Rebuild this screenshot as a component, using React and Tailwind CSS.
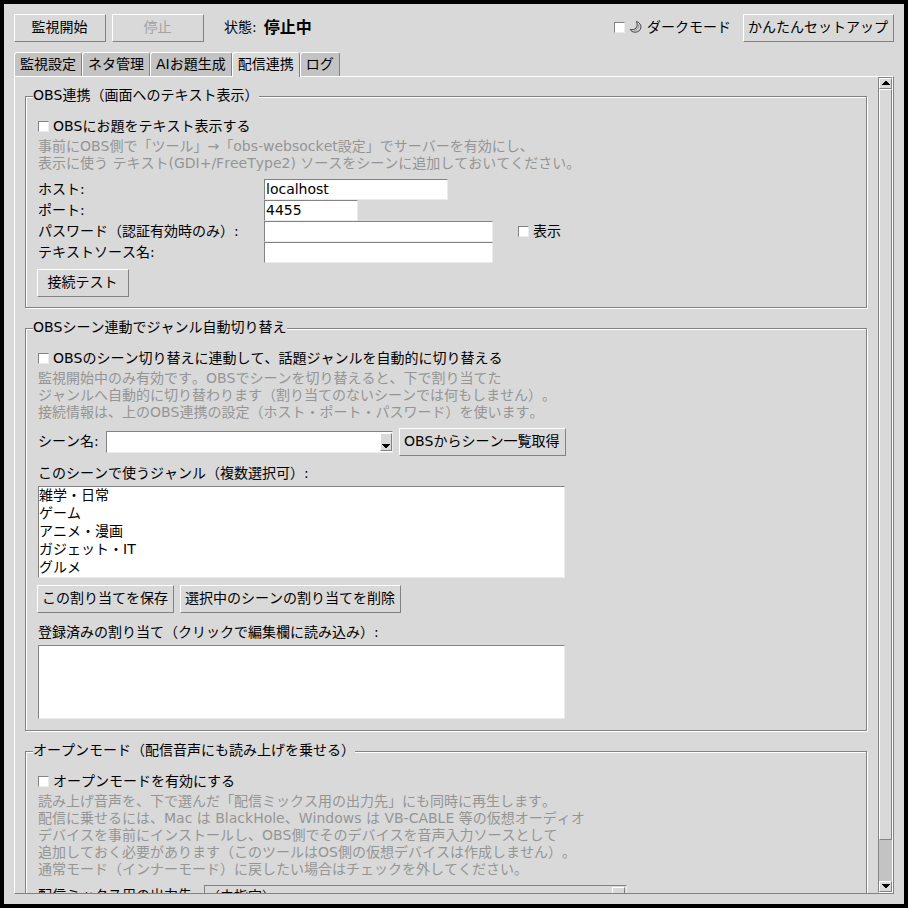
import React from "react";

const raised =
  "border border-t-white border-l-white border-r-[#828282] border-b-[#828282]";
const sunken =
  "border border-t-[#828282] border-l-[#828282] border-r-[#ebebeb] border-b-[#ebebeb]";

function Button({ children, className = "", ...props }) {
  return (
    <button
      type="button"
      className={`h-7 shrink-0 whitespace-nowrap bg-[#d9d9d9] pr-[5px] pb-[2px] pl-1 disabled:text-[#a3a3a3] ${raised} ${className}`}
      {...props}
    >
      {children}
    </button>
  );
}

function Check({ children, className = "" }) {
  return (
    <label className={`flex items-center gap-1 whitespace-nowrap ${className}`}>
      <input
        type="checkbox"
        className={`size-[11px] shrink-0 appearance-none bg-white checked:bg-[#4a6984] ${sunken}`}
      />
      {children}
    </label>
  );
}

function Group({ title, children }) {
  return (
    <fieldset className="min-w-0 border border-[#828282] px-[11px] pt-[11px] pb-[10px] shadow-[1px_1px_0_#fff,inset_1px_1px_0_#fff]">
      <legend className="-ml-1 h-[17px] bg-[#d9d9d9] leading-[15px]">{title}</legend>
      {children}
    </fieldset>
  );
}

function Hint({ lines }) {
  return (
    <p className="mt-[2px] pl-px leading-[17px] text-[#959595]">
      {lines.map((line) => (
        <span key={line} className="block whitespace-nowrap">
          {line}
        </span>
      ))}
    </p>
  );
}

function Field({ id, label, width, value = "", type = "text", children }) {
  return (
    <div className="flex h-[21px] items-center">
      <label htmlFor={id} className="w-[227px] shrink-0 pb-[2px] pl-px">
        {label}
      </label>
      <input
        id={id}
        type={type}
        defaultValue={value}
        className={`h-[21px] bg-white px-px pb-[2px] outline-none ${width} ${sunken}`}
      />
      {children}
    </div>
  );
}

function Arrow({ up = false }) {
  return (
    <svg width="8" height="5" viewBox="0 0 8 5" shapeRendering="crispEdges" aria-hidden="true">
      {up ? (
        <path d="M3 0h2v1h1v1h1v1h1v1H0V3h1V2h1V1h1z" />
      ) : (
        <path d="M0 0h8v1H7v1H6v1H5v1H3V3H2V2H1V1H0z" />
      )}
    </svg>
  );
}

function Moon() {
  return (
    <svg width="14" height="14" viewBox="0 0 14 14" aria-hidden="true">
      <path
        d="M7.500 1.500c2.800.900 4.800 3.200 4.400 6-.4 3-3 4.700-5.700 4.700-2.200 0-4.100-1-5-2.700 2.300.500 4.400 0 5.800-1.400C8.400 6.500 8.500 3.900 7.500 1.500z"
        fill="#cfcfcf"
        stroke="#333"
        strokeWidth="0.9"
      />
      <path d="M9.500 4.500c.700 2.700-1 5.300-4.300 5.900" fill="none" stroke="#888" strokeWidth="0.800" />
    </svg>
  );
}

const tabs = ["監視設定", "ネタ管理", "AIお題生成", "配信連携", "ログ"];
const genres = ["雑学・日常", "ゲーム", "アニメ・漫画", "ガジェット・IT", "グルメ"];

function Tab({ name, active }) {
  return (
    <button
      type="button"
      role="tab"
      aria-selected={active}
      className={`whitespace-nowrap rounded-t-[3px] border border-b-0 border-t-white border-l-white border-r-[#828282] px-[5px] ${
        active ? "relative -mb-px h-[25px] bg-[#d9d9d9] pb-[3px]" : "h-6 bg-[#c3c3c3] pb-[2px]"
      }`}
    >
      {name}
    </button>
  );
}

function Scrollbar() {
  return (
    <div
      aria-hidden="true"
      className="flex w-[15px] shrink-0 flex-col border border-t-[#828282] border-l-[#828282] border-r-white border-b-white bg-[#c3c3c3]"
    >
      <span className={`flex h-[11px] items-center justify-center bg-[#d9d9d9] ${raised}`}>
        <Arrow up />
      </span>
      <span className={`grow-[752] bg-[#d9d9d9] ${raised}`} />
      <span className="grow-[41]" />
      <span className={`flex h-[11px] items-center justify-center bg-[#d9d9d9] ${raised}`}>
        <Arrow />
      </span>
    </div>
  );
}

export default function App() {
  return (
    <div
      lang="ja"
      className="flex h-screen flex-col border-4 border-black bg-[#d9d9d9] p-[10px] font-['DejaVu_Sans','Noto_Sans_CJK_JP',sans-serif] text-sm leading-5 text-black [font-kerning:none] [text-spacing-trim:space-all]"
    >
      <header className="flex items-center">
        <Button className="w-[92px]">監視開始</Button>
        <Button className="ml-[6px] w-[92px]" disabled>
          停止
        </Button>
        <span className="ml-5 whitespace-nowrap pb-[2px]">状態:</span>
        <strong className="ml-[7px] whitespace-nowrap text-base leading-5">停止中</strong>
        <Check className="ml-auto pb-[2px]">
          <span className="flex items-center gap-1">
            <Moon />
            ダークモード
          </span>
        </Check>
        <Button className="ml-3">かんたんセットアップ</Button>
      </header>

      <div role="tablist" className="mt-[10px] flex items-start">
        {tabs.map((name) => (
          <Tab key={name} name={name} active={name === "配信連携"} />
        ))}
      </div>

      <main className="flex min-h-0 flex-1 border border-t-white border-l-white border-r-[#828282] border-b-[#828282]">
        <div className="flex min-w-0 flex-1 flex-col gap-3 overflow-x-hidden overflow-y-auto pt-[11px] pr-[11px] pl-[10px] [scrollbar-width:none]">
          <Group title="OBS連携（画面へのテキスト表示）">
            <Check className="h-5 pl-px">OBSにお題をテキスト表示する</Check>
            <Hint
              lines={[
                "事前にOBS側で「ツール」→「obs-websocket設定」でサーバーを有効にし、",
                "表示に使う テキスト(GDI+/FreeType2) ソースをシーンに追加しておいてください。",
              ]}
            />
            <div className="mt-[7px]">
              <Field id="host" label="ホスト:" width="w-[184px]" value="localhost" />
              <Field id="port" label="ポート:" width="w-[94px]" value="4455" />
              <Field
                id="password"
                type="password"
                label="パスワード（認証有効時のみ）:"
                width="w-[229px]"
              >
                <Check className="ml-[25px] pb-px">表示</Check>
              </Field>
              <Field id="source" label="テキストソース名:" width="w-[229px]" />
            </div>
            <Button className="mt-[6px] block w-[92px]">接続テスト</Button>
          </Group>

          <Group title="OBSシーン連動でジャンル自動切り替え">
            <Check className="h-5 pl-px">
              OBSのシーン切り替えに連動して、話題ジャンルを自動的に切り替える
            </Check>
            <Hint
              lines={[
                "監視開始中のみ有効です。OBSでシーンを切り替えると、下で割り当てた",
                "ジャンルへ自動的に切り替わります（割り当てのないシーンでは何もしません）。",
                "接続情報は、上のOBS連携の設定（ホスト・ポート・パスワード）を使います。",
              ]}
            />
            <div className="mt-[7px] flex items-center">
              <label htmlFor="scene" className="w-[69px] shrink-0 whitespace-nowrap pb-[2px] pl-px">
                シーン名:
              </label>
              <div className={`flex h-[22px] w-[287px] bg-white py-px pl-px ${sunken}`}>
                <input
                  id="scene"
                  type="text"
                  role="combobox"
                  aria-expanded="false"
                  aria-controls="scene-list"
                  className="min-w-0 flex-1 bg-white outline-none"
                />
                <button
                  type="button"
                  aria-label="シーン名"
                  className={`flex w-3 items-end justify-center bg-[#d9d9d9] pb-px ${raised}`}
                >
                  <Arrow />
                </button>
              </div>
              <Button className="ml-[6px]">OBSからシーン一覧取得</Button>
            </div>
            <label htmlFor="genres" className="mt-[7px] block pl-px leading-5">
              このシーンで使うジャンル（複数選択可）:
            </label>
            <select
              id="genres"
              multiple
              size={5}
              className={`mt-[3px] ml-px block h-[92px] w-[527px] appearance-none overflow-hidden bg-white p-0 outline-none ${sunken}`}
            >
              {genres.map((genre) => (
                <option key={genre} className="-mt-[3px] h-[21px] min-h-0 p-0">
                  {genre}
                </option>
              ))}
            </select>
            <div className="mt-[7px] flex gap-[6px]">
              <Button>この割り当てを保存</Button>
              <Button>選択中のシーンの割り当てを削除</Button>
            </div>
            <label htmlFor="assigned" className="mt-[9px] block pl-px leading-5">
              登録済みの割り当て（クリックで編集欄に読み込み）:
            </label>
            <select
              id="assigned"
              multiple
              size={4}
              className={`mt-[3px] mb-px ml-px block h-[74px] w-[527px] appearance-none overflow-hidden bg-white p-0 outline-none ${sunken}`}
            />
          </Group>

          <Group title="オープンモード（配信音声にも読み上げを乗せる）">
            <Check className="h-5 pl-px">オープンモードを有効にする</Check>
            <Hint
              lines={[
                "読み上げ音声を、下で選んだ「配信ミックス用の出力先」にも同時に再生します。",
                "配信に乗せるには、Mac は BlackHole、Windows は VB-CABLE 等の仮想オーディオ",
                "デバイスを事前にインストールし、OBS側でそのデバイスを音声入力ソースとして",
                "追加しておく必要があります（このツールはOS側の仮想デバイスは作成しません）。",
                "通常モード（インナーモード）に戻したい場合はチェックを外してください。",
              ]}
            />
            <div className="mt-[7px] flex items-center">
              <label htmlFor="output" className="w-[167px] shrink-0 whitespace-nowrap pb-[2px] pl-px">
                配信ミックス用の出力先:
              </label>
              <div className={`grid h-[22px] w-[423px] bg-[#d9d9d9] ${sunken}`}>
                <select
                  id="output"
                  className="col-start-1 row-start-1 appearance-none bg-transparent pb-[2px] pl-px leading-5 outline-none"
                >
                  <option>（未指定）</option>
                </select>
                <span
                  className={`pointer-events-none col-start-1 row-start-1 mt-px mr-px flex w-[13px] items-end justify-center justify-self-end pb-[2px] ${raised}`}
                >
                  <Arrow />
                </span>
              </div>
            </div>
          </Group>
        </div>
        <Scrollbar />
      </main>
    </div>
  );
}
